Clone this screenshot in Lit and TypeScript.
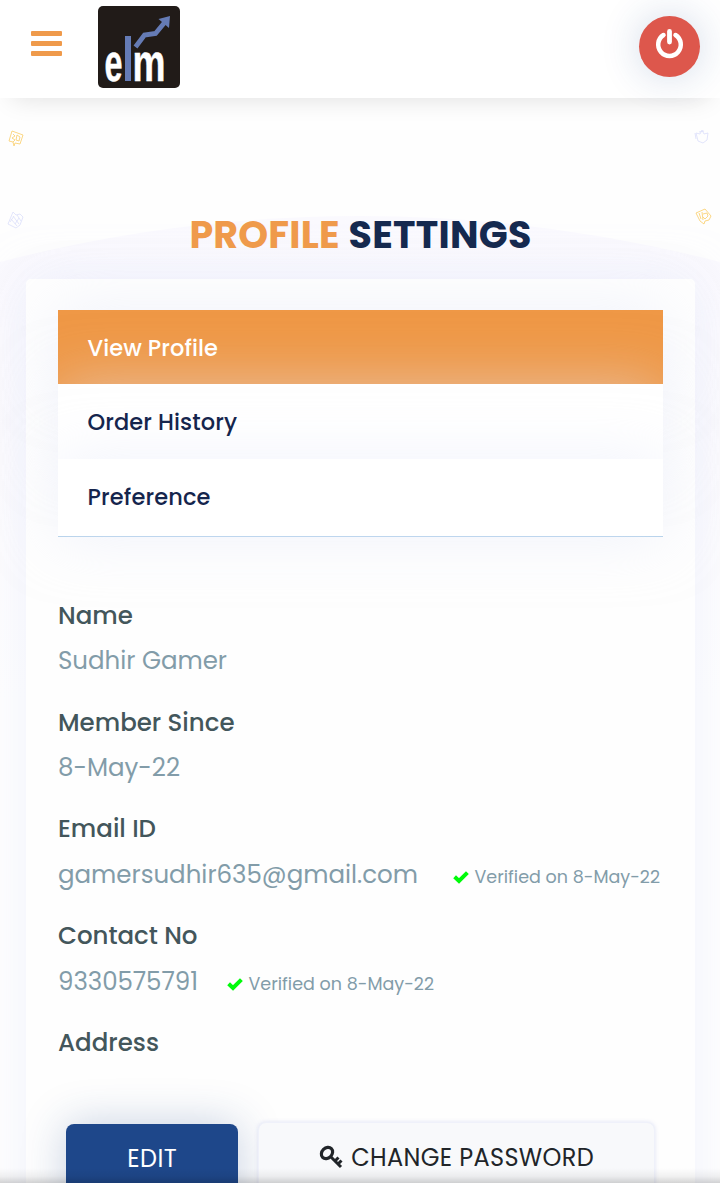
import { LitElement, html, css, svg, nothing } from "lit";
import { customElement, property } from "lit/decorators.js";

/** Text tracked so that it fills a given measure. */
@customElement("tracked-text")
class TrackedText extends LitElement {
  @property() text = "";
  @property({ type: Number }) measure = 0;

  static styles = css`
    :host { display: inline-block; white-space: nowrap; }
    .run { display: inline-block; white-space: pre; }
  `;

  updated() {
    const run = this.renderRoot.querySelector<HTMLElement>(".run")!;
    run.style.letterSpacing = "0px";
    const natural = run.getBoundingClientRect().width;
    const gap = (this.measure - natural) / Math.max(1, this.text.length - 1);
    run.style.letterSpacing = `${gap}px`;
    run.style.marginRight = `${-gap}px`;
  }

  render() {
    return html`<span class="run">${this.text}</span>`;
  }
}

const t = (text: string, measure: number) =>
  html`<tracked-text .text=${text} .measure=${measure}></tracked-text>`;

const check = svg`<path d="M1.6 6.800 6 11 14.400 2.600" fill="none" stroke="#00fb0a" stroke-width="4" />`;

interface Field {
  label: string;
  labelWidth: number;
  value?: string;
  valueWidth?: number;
  gap?: number;
}

const fields: Field[] = [
  { label: "Name", labelWidth: 75, value: "Sudhir Gamer", valueWidth: 169 },
  { label: "Member Since", labelWidth: 176.5, value: "8-May-22", valueWidth: 122 },
  { label: "Email ID", labelWidth: 98, value: "gamersudhir635@gmail.com", valueWidth: 360, gap: 35 },
  { label: "Contact No", labelWidth: 139.5, value: "9330575791", valueWidth: 140, gap: 29 },
  { label: "Address", labelWidth: 101 },
];

@customElement("app-root")
class AppRoot extends LitElement {
  static styles = css`
    :host {
      display: block;
      position: relative;
      height: 1183px;
      overflow: hidden;
      background: #fefefe;
      font-family: Poppins, Inter, "Open Sans", sans-serif;
    }
    * { box-sizing: border-box; }
    svg { display: block; flex: none; }
    header {
      position: relative;
      z-index: 2;
      height: 98px;
      display: flex;
      align-items: flex-start;
      padding: 6px 20px 0 31px;
      background: #fff;
      box-shadow: 0 12px 26px -12px rgba(0, 0, 0, 0.13);
    }
    .burger { margin-top: 25px; }
    .logo { margin-left: 36px; overflow: visible; }
    .power {
      margin: 10px 0 0 auto;
      width: 61px;
      height: 61px;
      border-radius: 50%;
      background: #dd574c;
      display: flex;
      justify-content: center;
      padding-top: 12px;
      box-shadow: 0 0 40px rgba(30, 71, 140, 0.2);
    }
    .scenery { position: absolute; left: 0; top: 98px; }
    main { position: relative; padding: 0 25px 0 26px; }
    h1 {
      margin: 0;
      height: 181px;
      padding-top: 107px;
      display: flex;
      justify-content: center;
      gap: 9px;
      font-size: 38px;
      line-height: 60px;
      font-weight: 700;
      color: #15294f;
    }
    .accent { color: #ef9a4b; }
    .card {
      height: 1000px;
      padding: 31px 32px;
      border-radius: 5px;
      background: #fefefe;
      box-shadow: 0 0 46px rgba(227, 231, 250, 0.55);
    }
    .menu { border-bottom: 1px solid #b3d1ea; }
    .item {
      height: 75px;
      padding: 1px 0 0 29.5px;
      font-size: 22.5px;
      line-height: 74px;
      font-weight: 500;
      color: #15254d;
      background: #fff;
      box-shadow: 0 0 60px rgba(227, 231, 250, 0.5);
    }
    .item.active { height: 74px; background: #ef9846; color: #fff; }
    .item.last { height: 77px; }
    .fields { padding-top: 56px; }
    .field { height: 106.7px; font-size: 24.5px; line-height: 45px; }
    .label { height: 45px; color: #43565b; font-weight: 500; }
    .value { height: 45px; display: flex; align-items: center; color: #829ca9; }
    .value.marked { height: 47px; }
    .verified {
      display: flex;
      align-items: center;
      gap: 5.5px;
      padding-top: 5px;
      font-size: 17.5px;
      line-height: 46px;
    }
    .spacer { flex: none; }
    .field.bare { height: 102px; }
    .actions { display: flex; align-items: flex-start; padding-left: 8px; gap: 20px; }
    .btn {
      height: 80px;
      border-radius: 8px;
      display: flex;
      justify-content: center;
      font-size: 24px;
      line-height: 69px;
    }
    .edit {
      margin-top: 2px;
      width: 172px;
      background: #1e478a;
      color: #fff;
      box-shadow: 0 0 44px rgba(30, 71, 138, 0.25);
    }
    .password {
      width: 397px;
      gap: 7px;
      background: #f8f9fb;
      color: #212529;
      border: 1px solid #eff1fa;
      box-shadow: 0 0 4px rgba(190, 198, 235, 0.45);
    }
    .key { margin-top: 22px; }
    .power svg { overflow: visible; }
    .fade {
      position: absolute;
      z-index: 3;
      left: 0;
      right: 0;
      bottom: 0;
      height: 15px;
      background: linear-gradient(rgba(0, 0, 0, 0), rgba(0, 0, 0, 0.05) 55%, rgba(0, 0, 0, 0.17));
    }
  `;

  private scenery() {
    return html`<svg class="scenery" width="720" height="700" viewBox="0 98 720 700" fill="none">
      <defs>
        <linearGradient id="hill" x1="0" y1="216" x2="0" y2="700" gradientUnits="userSpaceOnUse">
          <stop offset="0" stop-color="#faf9fe" />
          <stop offset=".5" stop-color="#fcfbfe" />
          <stop offset="1" stop-color="#fefefe" />
        </linearGradient>
      </defs>
      <path d="M0 262A1432 1432 0 0 1 720 262V700H0Z" fill="url(#hill)" />
      <g stroke="#fbd277" stroke-width=".9">
        <path d="m12 131 11 4-3 9-5-1-1 3-1-4-4-1Zm1 3 2 2-3 2 3 2-2 2m4-7 3 2-1 4-3-1Z" />
        <path d="m696 213 9-4 6 7-2 4-4 1-1 3-4-3Zm3 0 2 6m1-7 1 8m0-6 4-1 1 3-3 3-2-2" />
      </g>
      <g stroke="#dfe2fa" stroke-width=".9">
        <path d="m696 133 4 1 2-4 2 4 4-1-1 7-4 3-5-2Zm-1 0 1 6m3-7 5-1" />
        <path d="m13 212 3 3 4-1 3 3-3 8-4 3-8-4Zm0 4 6 8m-8-5 6 7m0-11 4 6m-7-5-4 6m9-4-4 6" />
      </g>
    </svg>`;
  }

  private verified(gap: number) {
    return html`<span class="spacer" style="width:${gap}px"></span>
      <span class="verified">
        <svg width="16" height="14" viewBox="0 0 16 14">${check}</svg>
        ${t("Verified on 8-May-22", 185.5)}
      </span>`;
  }

  render() {
    return html`
      <header>
        <svg class="burger" width="31" height="25" viewBox="0 0 31 25" fill="#ef9a4b">
          <rect width="31" height="5" rx="1" />
          <rect y="10" width="31" height="5" rx="1" />
          <rect y="20" width="31" height="5" rx="1" />
        </svg>
        <svg class="logo" width="82" height="82" viewBox="0 0 82 82">
          <rect width="82" height="82" rx="5" fill="#211b18" />
          <rect x="27" y="30" width="6" height="45" fill="#657bb5" />
          <path d="M37.500 41 46.500 29 57.500 27.500 67 16" fill="none" stroke="#657bb5" stroke-width="4.800" />
          <path d="M72 10 60.500 13 71 22Z" fill="#657bb5" />
          <g fill="#fff" stroke="#fff" stroke-width=".5" font-family="Liberation Sans" font-weight="700" font-size="51">
            <text x="6.500" y="75" textLength="18" lengthAdjust="spacingAndGlyphs">e</text>
            <text x="34.500" y="75" textLength="33" lengthAdjust="spacingAndGlyphs">m</text>
          </g>
        </svg>
        <div class="power">
          <svg width="28" height="30" viewBox="0 0 28 30" fill="none" stroke="#fff" stroke-linecap="round">
            <path d="M7.500 7A11.300 11.300 0 1 0 19.500 7" stroke-width="4.500" />
            <path d="M13.500 3.500V14" stroke-width="4.800" />
          </svg>
        </div>
      </header>
      ${this.scenery()}
      <main>
        <h1><span class="accent">${t("PROFILE", 150)}</span>${t("SETTINGS", 183)}</h1>
        <section class="card">
          <nav class="menu">
            <div class="item active">${t("View Profile", 130.5)}</div>
            <div class="item">${t("Order History", 149.5)}</div>
            <div class="item last">${t("Preference", 123)}</div>
          </nav>
          <div class="fields">
            ${fields.map(
              (f) => html`<div class="field ${f.value ? "" : "bare"}">
                <div class="label">${t(f.label, f.labelWidth)}</div>
                ${f.value
                  ? html`<div class="value ${f.gap ? "marked" : ""}">
                      ${t(f.value, f.valueWidth!)}${f.gap ? this.verified(f.gap) : nothing}
                    </div>`
                  : nothing}
              </div>`,
            )}
          </div>
          <div class="actions">
            <div class="btn edit">${t("EDIT", 49.5)}</div>
            <div class="btn password">
              <svg class="key" width="25" height="25" viewBox="0 0 25 25" fill="none" stroke="#212529">
                <ellipse cx="8" cy="8" rx="6.200" ry="5" stroke-width="3.200" transform="rotate(-45 8 8)" />
                <path d="m11.500 11.500 10.500 10.500M16 16l3.500-3.500M19 19l3.500-3.500" stroke-width="3" />
              </svg>
              ${t("CHANGE PASSWORD", 242.5)}
            </div>
          </div>
        </section>
      </main>
      <div class="fade"></div>
    `;
  }
}
